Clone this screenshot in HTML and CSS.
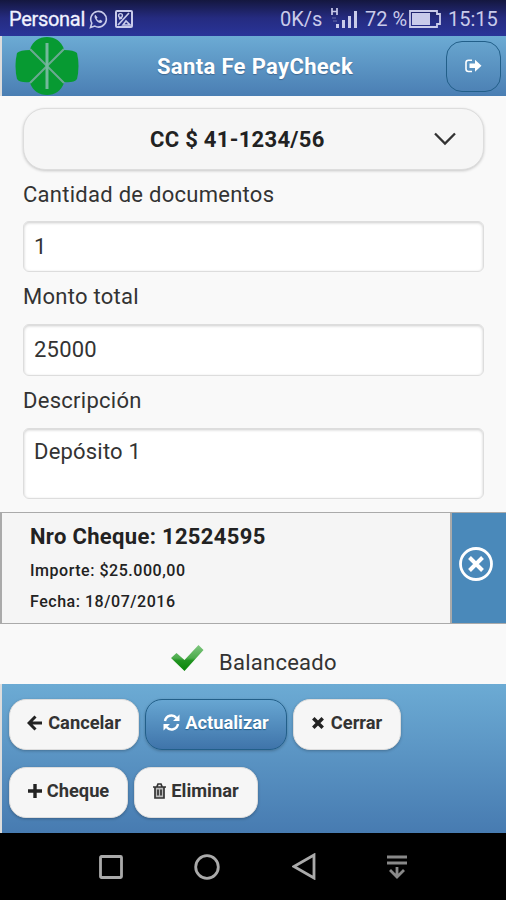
FILE: index.html
```html
<!DOCTYPE html>
<html lang="es">
<head>
<meta charset="utf-8">
<title>Santa Fe PayCheck</title>
<link rel="stylesheet" href="styles.css">
</head>
<body>
<div class="status">
  <span class="carrier">Personal</span>
  <svg class="wa" width="19" height="19" viewBox="0 0 19 19"><path d="M1.500 17.500l1.300-4.300a7.800 7.800 0 1 1 3 2.900z" fill="none" stroke="currentColor" stroke-width="1.600"/><path d="M6.300 4.800c-2 1.800.4 5.400 2.500 7.100 1.800 1.400 4.200 1.600 4.600-.8l-2.200-1.300-1.200 1c-1-.5-1.800-1.400-2.300-2.400l.9-1z" fill="currentColor"/></svg>
  <svg class="pic" width="18" height="18" viewBox="0 0 18 18"><rect x="1" y="1" width="16" height="16" rx="1" fill="none" stroke="currentColor" stroke-width="2"/><path d="M3 15L14 3M4 9l3-1M8 15l3-4 4 4z" stroke="currentColor" stroke-width="1.700" fill="none"/><circle cx="5.500" cy="5.500" r="1.900" fill="none" stroke="currentColor" stroke-width="1.400"/></svg>
  <span class="speed">0K/s</span>
  <svg class="signal" width="28" height="24" viewBox="0 0 28 24"><path d="M2 2v7M7 2v7M2 5.500h5" stroke="currentColor" stroke-width="1.700"/><path d="M2 12h4M3 15h4" stroke="currentColor" opacity=".4"/><path d="M6 18h3v4H6zM12 14h3v8h-3zM18 10h3v12h-3zM24 5h3v17h-3z" fill="currentColor"/></svg>
  <span class="percent">72 %</span>
  <svg class="battery" width="33" height="18" viewBox="0 0 33 18"><path d="M1 1h27v3h3v10h-3v3H1z" fill="none" stroke="currentColor" stroke-width="1.800"/><path d="M3 3h18v12H3z" fill="currentColor"/></svg>
  <span class="clock">15:15</span>
</div>
<header class="header">
  <svg class="logo" width="64" height="60" viewBox="0 0 64 60"><g fill="#079a32"><path d="M32 30L15 13C18 5 24 1 32 1s14 4 17 12z"/><path d="M32 30L15 47c3 8 9 12 17 12s14-4 17-12z"/><path d="M32 30L15 14Q5 14 2 17Q-1 30 2 43q3 4 13 3z"/><path d="M32 30l17-16q10 0 13 3 3 13 0 26-3 4-13 3z"/></g><path d="M15 13l34 34M49 13L15 47" stroke="#6aaa91" stroke-width="2"/><path d="M32 7v46" stroke="#73b99b" stroke-width="3"/></svg>
  <h1 class="title">Santa Fe PayCheck</h1>
  <button class="exit" aria-label="Salir"><svg width="17" height="14" viewBox="0 0 17 14"><path d="M7 1.200H3.500Q1 1.200 1 3.500v6.500q0 2.500 2.500 2.500H7" fill="none" stroke="#fff" stroke-width="1.600"/><path d="M4.500 4.500H10V.8L16.500 6.800 10 12.800V9H4.500z" fill="#fff"/></svg></button>
</header>
<main class="form">
  <button class="select"><span class="account">CC $ 41-1234/56</span><svg class="chevron" width="24" height="16" viewBox="0 0 24 16"><path d="M2 2.500l10 10 10-10" fill="none" stroke="#333" stroke-width="2.300"/></svg></button>
  <label class="label l1">Cantidad de documentos</label>
  <div class="input"><span class="v1">1</span></div>
  <label class="label l2">Monto total</label>
  <div class="input second"><span class="v2">25000</span></div>
  <label class="label l3">Descripción</label>
  <div class="input area"><span class="v3">Depósito 1</span></div>
</main>
<section class="check">
  <div class="info">
    <h2 class="number">Nro Cheque: 12524595</h2>
    <p class="detail d1">Importe: $25.000,00</p>
    <p class="detail d2">Fecha: 18/07/2016</p>
  </div>
  <button class="remove" aria-label="Quitar"><svg width="34" height="34" viewBox="0 0 34 34"><circle cx="17" cy="17" r="15.500" fill="none" stroke="#fff" stroke-width="2.800"/><path d="M10.500 10.500l13 13M23.500 10.500l-13 13" stroke="#fff" stroke-width="4"/></svg></button>
</section>
<div class="balance">
  <svg width="33" height="26" viewBox="0 0 33 26"><defs><linearGradient id="tick" x1="0" y1="0" x2="0" y2="1"><stop offset="0" stop-color="#80c780"/><stop offset=".5" stop-color="#4dac4d"/><stop offset=".6" stop-color="#219421"/><stop offset="1" stop-color="#078507"/></linearGradient></defs><path d="M0 13l5.500-5 8 7L27.500 0l5 5L13.500 26z" fill="url(#tick)"/></svg>
  <span class="balanced">Balanceado</span>
</div>
<footer class="footer">
  <div class="row">
    <button class="btn cancel"><svg width="16" height="16" viewBox="0 0 16 16"><path d="M8.500 1.500L2 8l6.500 6.500M2.500 8H15" fill="none" stroke="#222" stroke-width="3"/></svg><span>Cancelar</span></button>
    <button class="btn update"><svg width="17" height="17" viewBox="0 0 17 17"><path d="M2 7a6.500 6.500 0 0 1 11.500-3M15 10a6.500 6.500 0 0 1-11.500 3" fill="none" stroke="#fff" stroke-width="2.400"/><path d="M16.500.5v6.500H10zM.5 16.500V10H7z" fill="#fff"/></svg><span>Actualizar</span></button>
    <button class="btn close"><svg width="12" height="12" viewBox="0 0 12 12"><path d="M1.300 1.300l9.400 9.400M10.700 1.300l-9.400 9.400" stroke="#222" stroke-width="3.500"/></svg><span>Cerrar</span></button>
  </div>
  <div class="row">
    <button class="btn add"><svg width="14" height="14" viewBox="0 0 14 14"><path d="M7 0v14M0 7h14" stroke="#222" stroke-width="3.400"/></svg><span>Cheque</span></button>
    <button class="btn delete"><svg width="13" height="16" viewBox="0 0 13 16"><path d="M2 4h9v11H2z" fill="#bbb"/><path d="M0 4h13M4 3.500l1-2.500h3l1 2.500M2 4v11h9V4M5 6.500v6M8 6.500v6" fill="none" stroke="#333" stroke-width="1.700"/></svg><span>Eliminar</span></button>
  </div>
</footer>
<nav class="nav">
  <svg width="24" height="24" viewBox="0 0 24 24"><rect x="1.500" y="1.500" width="21" height="21" rx="1"/></svg>
  <svg width="26" height="26" viewBox="0 0 26 26"><circle cx="13" cy="13" r="11.300"/></svg>
  <svg width="24" height="27" viewBox="0 0 24 27"><path d="M22 2v23L2 13.500z"/></svg>
  <svg class="down" width="20" height="24" viewBox="0 0 20 24"><path d="M0 2h20M0 8h20M10 12v10M3 15l7 7 7-7"/></svg>
</nav>
</body>
</html>
```
FILE: styles.css
```css
* { box-sizing: border-box; }
body { margin: 0; width: 506px; height: 900px; overflow: hidden; background: #f9f9f9; color: #333; font-family: Roboto, sans-serif; }
button { font: inherit; padding: 0; }
svg { display: block; flex: none; }
span, h1, h2, p { white-space: nowrap; }

.status { height: 36px; display: flex; align-items: center; padding: 2px 8px 0 9px; font-size: 20px; color: #c9cbea; background: linear-gradient(#14173f, #252b80 50%, #293499); }
.carrier { width: 80px; color: #f1f2ff; letter-spacing: -.3px; -webkit-text-stroke: .3px #f1f2ff; }
.wa { margin-right: 7px; }
.speed { margin-left: auto; width: 50px; }
.signal { width: 28px; margin-bottom: 3px; margin-right: 7px; }
.percent { width: 44px; }
.battery { margin-right: 6px; }
.clock { width: 50px; }

.header { height: 60px; display: flex; align-items: center; border-left: 2px solid #ddd; padding: 0 5px 0 13px; background: linear-gradient(#6cabd4, #4a7eb3); }
.title { flex: 1; margin: 2px 0 0; text-align: center; font-size: 22px; line-height: 28px; font-weight: 700; letter-spacing: .35px; color: #fff; text-shadow: 0 1px 1px #3e6790; padding-right: 15px; }
.exit { width: 55px; height: 51px; display: grid; place-items: center; border: 1px solid #225f89; border-radius: 16px; background: linear-gradient(#67a4ce, #4d82b5); }

.form { height: 416px; padding: 12px 22px 0 23px; }
.select { width: 461px; height: 62px; display: flex; align-items: center; border: 1px solid #ddd; border-radius: 22px; background: #f6f6f6; box-shadow: 0 1px 3px rgba(0,0,0,.2); padding-left: 126px; color: #222; }
.account { width: 283px; text-align: left; font-size: 22px; font-weight: 700; letter-spacing: .3px; }
.label { display: block; height: 51px; line-height: 50px; font-size: 22px; letter-spacing: .27px; }
.input { width: 461px; height: 51px; padding: 0 10px; line-height: 50px; font-size: 22px; letter-spacing: .2px; border: 1px solid #ddd; border-radius: 6px; background: #fff; box-shadow: inset 0 1px 3px rgba(0,0,0,.2); }
.second, .l2 { height: 52px; }
.l3 { height: 52px; }
.area { height: 71px; line-height: 46px; }

.check { height: 112px; display: flex; border: 1px solid #aaa; border-left-width: 2px; border-right: 0; background: #f5f5f5; }
.info { width: 448px; padding: 7px 0 0 28px; color: #222; }
.number { margin: 0; font-size: 22px; line-height: 33px; font-weight: 700; letter-spacing: .33px; }
.detail { margin: 0; font-size: 16px; line-height: 31px; font-weight: 500; letter-spacing: .53px; }
.d1 { margin-top: 2px; }
.remove { flex: 1; display: grid; place-items: center; border: 0; border-left: 2px solid #aaa; background: #4a89ba; padding: 0 7px 9px 0; }

.balance { height: 60px; display: flex; align-items: flex-start; padding: 21px 0 0 171px; }
.balanced { margin: 1px 0 0 15px; font-size: 22px; line-height: 34px; letter-spacing: .25px; }

.footer { height: 149px; border-left: 2px solid #ddd; padding: 15px 7px 0; background: linear-gradient(#6cabd4, #477bb1); }
.row { display: flex; gap: 6px; margin-bottom: 17px; }
.btn { height: 51px; display: flex; align-items: center; justify-content: center; gap: 5px; padding-bottom: 4px; border: 1px solid #ddd; border-radius: 17px; background: #f6f6f6; color: #333; font-size: 18.3px; font-weight: 700; box-shadow: 0 1px 3px rgba(0,0,0,.25); }
.cancel { width: 130px; }
.update { width: 142px; color: #fff; border-color: #225f89; background: linear-gradient(#67a6d2, #3f74aa); text-shadow: 0 1px 1px #225f89; }
.close { width: 108px; gap: 7px; }
.add { width: 119px; }
.delete { width: 124px; }

.nav { height: 67px; display: flex; align-items: center; padding: 0 99px; justify-content: space-between; background: #000; }
.nav svg { fill: none; stroke: #aaa; stroke-width: 2.800; }
.nav .down { stroke: #888; }
```
